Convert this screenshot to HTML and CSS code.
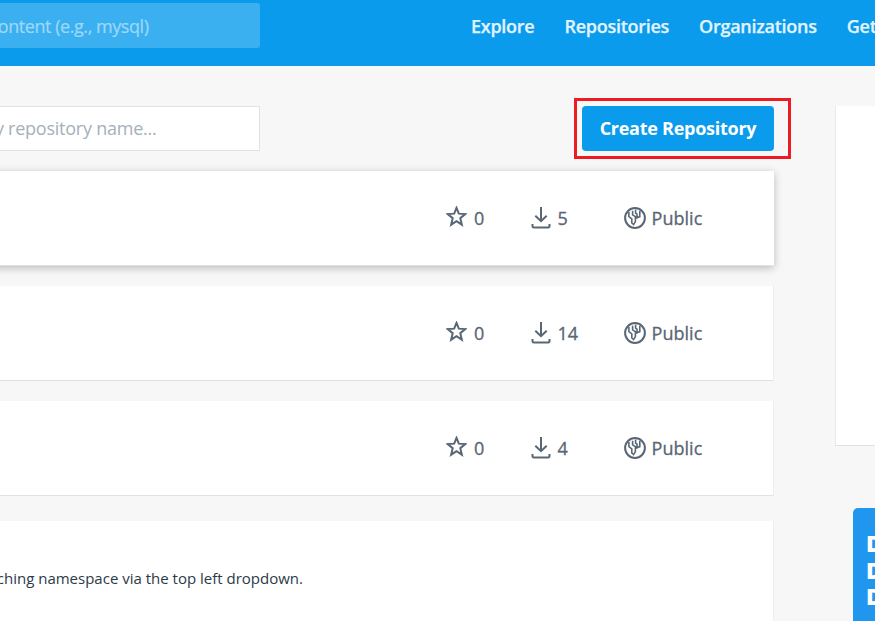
FILE: index.html
```html
<!DOCTYPE html>
<html lang="en">
<head>
<meta charset="utf-8">
<title>Repositories</title>
<link rel="stylesheet" href="styles.css">
</head>
<body>
<svg class="sprite" aria-hidden="true">
  <symbol id="star" viewBox="0 0 20 20"><path d="M10 1.8 12.2 7.3 18.3 7.7 13.6 11.6 15.1 17.8 10 14.5 4.9 17.8 6.4 11.6 1.7 7.7 7.8 7.3Z" fill="none" stroke="currentColor" stroke-width="1.9"/></symbol>
  <symbol id="download" viewBox="0 0 20 23"><path d="M10 1V15M4.3 9.8 10 15.2 15.7 9.8" fill="none" stroke="currentColor" stroke-width="2"/><path d="M1.5 18V20Q1.5 21.5 3 21.5H17Q18.5 21.5 18.5 20V18" fill="none" stroke="currentColor" stroke-width="2"/></symbol>
  <symbol id="globe" viewBox="0 0 22 22"><circle cx="11" cy="11" r="9.9" fill="none" stroke="currentColor" stroke-width="2"/><path d="M4.9 5V9.7L7.8 11.8V16L9.6 17.6 11.4 14.6V9.6L8.6 7.8V3.8M11.6 2.5V6.2L13 7.2V10.8L15.8 9.6V4" fill="none" stroke="currentColor" stroke-width="1.6"/></symbol>
</svg>
<header class="topbar">
  <div class="search"><span>content (e.g., mysql)</span></div>
  <nav class="nav">
    <a>Explore</a><a>Repositories</a><a>Organizations</a><a>Get Help</a>
  </nav>
</header>
<div class="page">
  <main class="main">
    <div class="toolbar">
      <div class="filter"><span>by repository name...</span></div>
      <div class="highlight"><button class="create">Create Repository</button></div>
    </div>
    <section class="card active">
      <div class="stat stars"><svg><use href="#star"/></svg><span>0</span></div>
      <div class="stat pulls"><svg><use href="#download"/></svg><span>5</span></div>
      <div class="stat access"><svg><use href="#globe"/></svg><span>Public</span></div>
    </section>
    <section class="card">
      <div class="stat stars"><svg><use href="#star"/></svg><span>0</span></div>
      <div class="stat pulls"><svg><use href="#download"/></svg><span>14</span></div>
      <div class="stat access"><svg><use href="#globe"/></svg><span>Public</span></div>
    </section>
    <section class="card">
      <div class="stat stars"><svg><use href="#star"/></svg><span>0</span></div>
      <div class="stat pulls"><svg><use href="#download"/></svg><span>4</span></div>
      <div class="stat access"><svg><use href="#globe"/></svg><span>Public</span></div>
    </section>
    <section class="notice"><p>ching namespace via the top left dropdown.</p></section>
  </main>
  <aside class="side">
    <div class="panel"></div>
    <div class="promo"><span>D</span><span>D</span><span>D</span></div>
  </aside>
</div>
</body>
</html>
```
FILE: styles.css
```css
* { box-sizing: border-box; }
body {
  margin: 0;
  height: 621px;
  overflow: hidden;
  background: #f7f7f7;
  font-family: "Open Sans", sans-serif;
  color: #596675;
}
.sprite { display: none; }
.topbar {
  display: flex;
  height: 66px;
  padding-top: 3px;
  background: #0a9bed;
  overflow: hidden;
}
.search, .filter {
  display: flex;
  justify-content: flex-end;
  flex: none;
  width: 260px;
  height: 45px;
  overflow: hidden;
  white-space: nowrap;
  font-size: 18px;
}
.search {
  padding-right: 111.5px;
  border-radius: 0 3px 3px 0;
  background: #3bb0f1;
  color: #9dd8f8;
  line-height: 47px;
  letter-spacing: -0.45px;
  -webkit-text-stroke: 0.2px;
}
.nav {
  display: flex;
  gap: 30px;
  margin-left: 211px;
  color: #e1f3fd;
  font-size: 18px;
  font-weight: 600;
  line-height: 46px;
  letter-spacing: -0.27px;
  white-space: nowrap;
  -webkit-text-stroke: 0.25px;
}
.page { display: flex; overflow: hidden; }
.main { flex: none; width: 774px; }
.toolbar {
  display: flex;
  justify-content: space-between;
  height: 105px;
  padding-top: 32px;
}
.filter {
  margin-top: 8px;
  padding-right: 102.5px;
  border: 1px solid #e1e2e3;
  border-left: 0;
  background: #fff;
  color: #a5b0ba;
  line-height: 43px;
  letter-spacing: -0.24px;
}
.highlight {
  flex: none;
  width: 217px;
  height: 61px;
  margin-right: -17px;
  padding: 5px;
  border: 3px solid #ed1c24;
}
.create {
  display: block;
  width: 192px;
  height: 45px;
  padding: 0;
  border: 0;
  border-radius: 4px;
  background: #0a9bed;
  color: #fff;
  font: 700 18px/45px "Open Sans", sans-serif;
  letter-spacing: -0.26px;
}
.card {
  display: flex;
  height: 95px;
  margin: 0 0 20px -20px;
  padding-left: 465px;
  border-right: 1px solid #eceeef;
  border-bottom: 1px solid #dde2e6;
  background: #fff;
}
.active { border-right-color: #fff; box-shadow: 0 2px 8px rgba(0, 0, 0, 0.25); }
.stat {
  display: flex;
  align-items: center;
  font-size: 18px;
  font-weight: 500;
  -webkit-text-stroke: 0.3px;
}
.stat svg { flex: none; overflow: visible; }
.stars { width: 86px; }
.stars svg { width: 21px; height: 21px; margin: -3px 7.5px 0 0.5px; }
.pulls { width: 92px; }
.pulls svg { width: 20px; height: 23px; margin: -1px 6.5px 0 0; }
.access svg { width: 22px; height: 22px; margin: -1px 5.5px 0 1px; }
.access { letter-spacing: 0.05px; }
.notice {
  height: 120px;
  margin-top: 25px;
  padding-top: 45px;
  border-right: 1px solid #eceeef;
  background: #fff;
}
.notice p {
  width: 303px;
  margin: 0;
  display: flex;
  justify-content: flex-end;
  white-space: nowrap;
  color: #2b3a48;
  font-size: 15px;
  line-height: 24px;
}
.side { flex: none; width: 300px; margin-left: 61px; padding-top: 40px; }
.panel {
  height: 340px;
  border: 1px solid #e7e9eb;
  border-top: 0;
  border-bottom-color: #dde2e6;
  background: #fff;
}
.promo {
  display: grid;
  grid-auto-rows: 26.7px;
  height: 140px;
  margin: 62px 0 0 18px;
  padding: 22px 0 0 13px;
  border-radius: 5px;
  background: #2196ee;
  color: #fff;
  font-size: 22px;
  font-weight: 800;
  line-height: 26px;
}
```
